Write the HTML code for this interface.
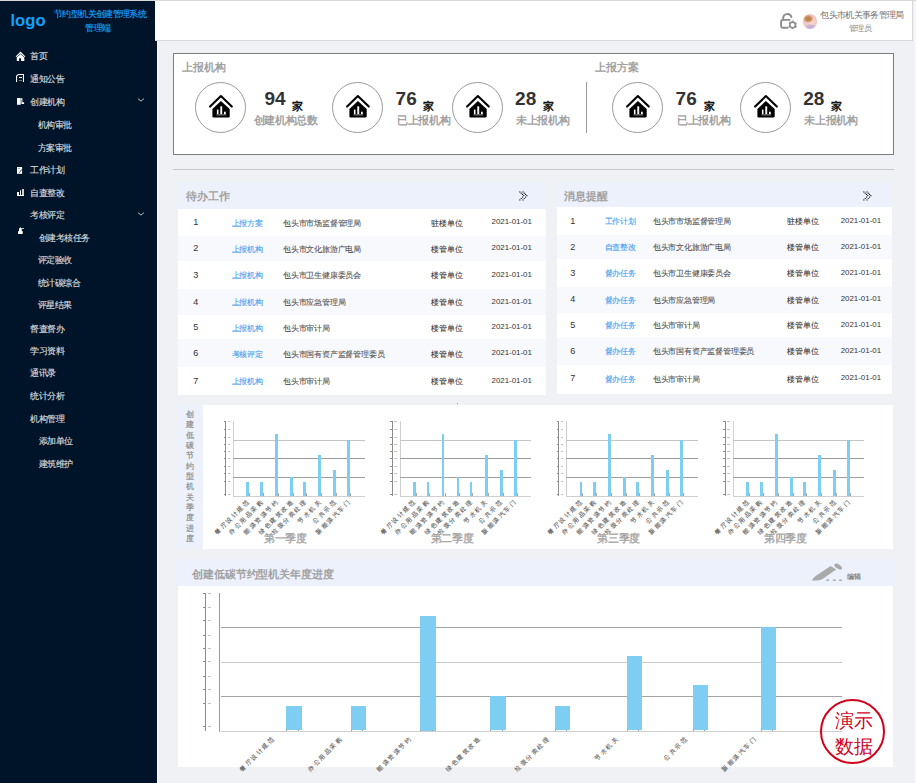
<!DOCTYPE html><html><head><meta charset="utf-8"><style>
html,body{margin:0;padding:0}
body{width:916px;height:783px;overflow:hidden;position:relative;background:#f0f1f5;font-family:"Liberation Sans", sans-serif}
.t{position:absolute;white-space:nowrap}
.b{position:absolute;box-sizing:border-box}
svg{position:absolute;overflow:visible}
</style></head><body>
<div class="b" style="left:0px;top:0px;width:916px;height:1px;background:#d9d9d9"></div>
<div class="b" style="left:0px;top:1px;width:157px;height:782px;background:#001429"></div>
<div class="b" style="left:155px;top:1px;width:758px;height:40px;background:#fff;border-bottom:1px solid #d8d8d8;border-right:1px solid #d8d8d8"></div>
<div class="b" style="left:157px;top:41px;width:1px;height:742px;background:#ffffff"></div>
<div class="b" style="left:914px;top:1px;width:2px;height:782px;background:#f5f6f9"></div>
<div class="b" style="left:456.5px;top:402.5px;width:1.5px;height:1.5px;background:#7a6a80;border-radius:50%"></div>
<div class="t" style="left:10.5px;top:9.6px;font-size:16.6px;line-height:22px;font-weight:700;color:#12a2ff">logo</div>
<div class="t" style="left:54.12px;top:8.40px;font-size:9px;letter-spacing:-0.64px;line-height:12px;color:#17a0fa;font-weight:400;-webkit-text-stroke:0.15px #17a0fa">节约型机关创建管理系统</div>
<div class="t" style="left:85.40px;top:21.80px;font-size:9px;letter-spacing:-0.80px;line-height:12px;color:#17a0fa;font-weight:400;-webkit-text-stroke:0.15px #17a0fa">管理端</div>
<div class="t" style="left:30.2px;top:50.00px;font-size:9px;letter-spacing:-0.55px;line-height:12px;color:#d5d9de;font-weight:400;-webkit-text-stroke:0.15px #d5d9de">首页</div>
<div class="t" style="left:30.2px;top:73.00px;font-size:9px;letter-spacing:-0.55px;line-height:12px;color:#d5d9de;font-weight:400;-webkit-text-stroke:0.15px #d5d9de">通知公告</div>
<div class="t" style="left:30.2px;top:96.00px;font-size:9px;letter-spacing:-0.55px;line-height:12px;color:#d5d9de;font-weight:400;-webkit-text-stroke:0.15px #d5d9de">创建机构</div>
<div class="t" style="left:38px;top:119.00px;font-size:9px;letter-spacing:-0.55px;line-height:12px;color:#d5d9de;font-weight:400;-webkit-text-stroke:0.15px #d5d9de">机构审批</div>
<div class="t" style="left:38px;top:141.60px;font-size:9px;letter-spacing:-0.55px;line-height:12px;color:#d5d9de;font-weight:400;-webkit-text-stroke:0.15px #d5d9de">方案审批</div>
<div class="t" style="left:30.4px;top:164.40px;font-size:9px;letter-spacing:-0.55px;line-height:12px;color:#d5d9de;font-weight:400;-webkit-text-stroke:0.15px #d5d9de">工作计划</div>
<div class="t" style="left:30.4px;top:187.00px;font-size:9px;letter-spacing:-0.55px;line-height:12px;color:#d5d9de;font-weight:400;-webkit-text-stroke:0.15px #d5d9de">自查整改</div>
<div class="t" style="left:30.4px;top:209.00px;font-size:9px;letter-spacing:-0.55px;line-height:12px;color:#d5d9de;font-weight:400;-webkit-text-stroke:0.15px #d5d9de">考核评定</div>
<div class="t" style="left:39px;top:232.00px;font-size:9px;letter-spacing:-0.55px;line-height:12px;color:#d5d9de;font-weight:400;-webkit-text-stroke:0.15px #d5d9de">创建考核任务</div>
<div class="t" style="left:38px;top:254.00px;font-size:9px;letter-spacing:-0.55px;line-height:12px;color:#d5d9de;font-weight:400;-webkit-text-stroke:0.15px #d5d9de">评定验收</div>
<div class="t" style="left:38px;top:276.50px;font-size:9px;letter-spacing:-0.55px;line-height:12px;color:#d5d9de;font-weight:400;-webkit-text-stroke:0.15px #d5d9de">统计碳综合</div>
<div class="t" style="left:38px;top:299.20px;font-size:9px;letter-spacing:-0.55px;line-height:12px;color:#d5d9de;font-weight:400;-webkit-text-stroke:0.15px #d5d9de">评星结果</div>
<div class="t" style="left:30.4px;top:322.50px;font-size:9px;letter-spacing:-0.55px;line-height:12px;color:#d5d9de;font-weight:400;-webkit-text-stroke:0.15px #d5d9de">督查督办</div>
<div class="t" style="left:30.4px;top:344.50px;font-size:9px;letter-spacing:-0.55px;line-height:12px;color:#d5d9de;font-weight:400;-webkit-text-stroke:0.15px #d5d9de">学习资料</div>
<div class="t" style="left:30.4px;top:367.20px;font-size:9px;letter-spacing:-0.55px;line-height:12px;color:#d5d9de;font-weight:400;-webkit-text-stroke:0.15px #d5d9de">通讯录</div>
<div class="t" style="left:30.2px;top:390.30px;font-size:9px;letter-spacing:-0.55px;line-height:12px;color:#d5d9de;font-weight:400;-webkit-text-stroke:0.15px #d5d9de">统计分析</div>
<div class="t" style="left:30.2px;top:413.30px;font-size:9px;letter-spacing:-0.55px;line-height:12px;color:#d5d9de;font-weight:400;-webkit-text-stroke:0.15px #d5d9de">机构管理</div>
<div class="t" style="left:38.9px;top:435.20px;font-size:9px;letter-spacing:-0.55px;line-height:12px;color:#d5d9de;font-weight:400;-webkit-text-stroke:0.15px #d5d9de">添加单位</div>
<div class="t" style="left:38.9px;top:458.30px;font-size:9px;letter-spacing:-0.55px;line-height:12px;color:#d5d9de;font-weight:400;-webkit-text-stroke:0.15px #d5d9de">建筑维护</div>
<svg style="left:137px;top:98px" width="8" height="5" viewBox="0 0 8 5"><polyline points="1,0.7 3.95,3.1 6.9,0.7" fill="none" stroke="#c5cad0" stroke-width="0.95"/></svg>
<svg style="left:137px;top:212.4px" width="8" height="5" viewBox="0 0 8 5"><polyline points="1,0.7 3.95,3.1 6.9,0.7" fill="none" stroke="#c5cad0" stroke-width="0.95"/></svg>
<svg style="left:14px;top:50px" width="13" height="13" viewBox="0 0 13 13"><path d="M1.6 6.4 L6.5 1.6 L11.4 6.4 L10.3 7.1 V11 H7.1 V8.3 H5.1 V11 H2.8 V7.1 Z" fill="#ffffff"/><path d="M2.6 7.2 L6.5 3.9 L10.4 7.2" fill="none" stroke="#001429" stroke-width="0.7"/></svg>
<svg style="left:13px;top:72px" width="14" height="12" viewBox="0 0 14 12"><path d="M3.55 10 V4 L5.4 2.45 H10.45 V10" fill="none" stroke="#ffffff" stroke-width="1.05"/><rect x="6" y="5" width="3" height="1" fill="#ffffff"/><rect x="6" y="8" width="3" height="0.9" fill="#7a8590"/></svg>
<svg style="left:14px;top:95px" width="12" height="12" viewBox="0 0 12 12"><path d="M3 3 H6.7 V9.8 H3 Z" fill="#ffffff"/><path d="M6.7 3.3 H8.4 V7.3 H10.1 V9.1 H7.4 V4.6 H6.7 Z" fill="#ffffff"/></svg>
<svg style="left:14px;top:164px" width="12" height="12" viewBox="0 0 12 12"><path d="M3 3 H8.1 V9.8 H3 Z" fill="#ffffff"/><path d="M4.2 4.5 H6.1" stroke="#9aa3ad" stroke-width="1"/><path d="M7.9 5.3 L5.4 8.6" stroke="#001429" stroke-width="0.75"/></svg>
<svg style="left:14px;top:186px" width="12" height="12" viewBox="0 0 12 12"><path d="M3 9 H10 V10 H3 Z M3 6 H5 V9.5 H3 Z M6 4.3 H7 V9.5 H6 Z M8.2 2.9 H9.8 V9.5 H8.2 Z" fill="#ffffff"/></svg>
<svg style="left:15px;top:224px" width="12" height="12" viewBox="0 0 12 12"><path d="M3 7.3 H7.8 V9.2 Q7.8 10 7 10 H3.5 Q3 10 3 9.4 Z M4 4.2 H4.8 L5.4 2.9 L6 4.2 H9 V5 H6.8 V7.3 H4 Z" fill="#ffffff"/></svg>
<svg style="left:778px;top:11px" width="22" height="20" viewBox="0 0 22 20"><g fill="none" stroke="#8c8c8c" stroke-width="1.9" stroke-linecap="round"><path d="M5.2 8.9 V7.2 A4.2 4.2 0 0 1 13.4 5.97"/><path d="M11.6 8.9 H4.6 Q3.1 8.9 3.1 10.4 V15.2 Q3.1 16.7 4.6 16.7 H9.6"/><circle cx="14.6" cy="13.9" r="2.8" stroke-width="1.6"/><circle cx="14.6" cy="13.9" r="3.85" stroke-width="1.1" stroke-linecap="butt" stroke-dasharray="1.7 2.33" stroke-dashoffset="-1.17"/></g></svg>
<div class="b" style="left:802.8px;top:14.2px;width:14.4px;height:14.4px;border-radius:50%;background:radial-gradient(ellipse 38% 28% at 38% 32%,#b8773f 0,#c8905a 55%,rgba(0,0,0,0) 100%),radial-gradient(ellipse 45% 25% at 55% 90%,#d9a6d6 0,#c8b8d0 60%,rgba(0,0,0,0) 100%),radial-gradient(circle at 55% 55%,#f6dcd0 0,#f5c8c8 50%,#f2b9bb 100%)"></div>
<div class="t" style="left:820.2px;top:8.80px;font-size:9px;letter-spacing:-0.66px;line-height:12px;color:#707070;font-weight:400;">包头市机关事务管理局</div>
<div class="t" style="left:849.2px;top:23.70px;font-size:8px;letter-spacing:-0.80px;line-height:10px;color:#858585;font-weight:400;">管理员</div>
<div class="b" style="left:173px;top:53px;width:721px;height:102px;background:#fff;border:1px solid #7c7c7c"></div>
<div class="b" style="left:173px;top:169px;width:721px;height:1px;background:#c9c9c9"></div>
<div class="t" style="left:182.4px;top:60.30px;font-size:11px;letter-spacing:-0.25px;line-height:14px;color:#a2a2a2;font-weight:700;">上报机构</div>
<div class="t" style="left:595.3px;top:60.30px;font-size:11px;letter-spacing:-0.25px;line-height:14px;color:#a2a2a2;font-weight:700;">上报方案</div>
<div class="b" style="left:586px;top:82px;width:1px;height:51px;background:#9a9a9a"></div>
<div class="b" style="left:195.4px;top:82px;width:51px;height:51px;border:1px solid #9a9a9a;border-radius:50%;background:#fff"></div>
<svg style="left:205.00px;top:90.30px" width="32" height="32" viewBox="0 0 32 32"><path d="M5.1 16.6 L15.9 6.1 L26.8 16.6" fill="none" stroke="#000" stroke-width="2.1" stroke-linecap="round" stroke-linejoin="round"/><path d="M7.4 18.9 L15.9 11 L24.7 18.9 V26.3 Q24.7 27.6 23.4 27.6 H8.7 Q7.4 27.6 7.4 26.3 Z" fill="#000"/><rect x="11.9" y="19.6" width="1.6" height="4.6" fill="#fff"/><rect x="15.3" y="16.3" width="1.9" height="7.9" fill="#fff"/><rect x="19" y="21.7" width="1.8" height="2.5" fill="#fff"/><rect x="11.5" y="24.3" width="9.7" height="1.1" fill="#888"/></svg>
<div class="t" style="left:264.5px;top:88px;font-size:19px;line-height:22px;font-weight:700;color:#333">94</div>
<div class="t" style="left:292px;top:99.00px;font-size:11px;letter-spacing:0.00px;line-height:14px;color:#000;font-weight:400;-webkit-text-stroke:0.35px #000">家</div>
<div class="t" style="left:253.7px;top:113.10px;font-size:11px;letter-spacing:-0.30px;line-height:14px;color:#a2a2a2;font-weight:700;">创建机构总数</div>
<div class="b" style="left:332.0px;top:82px;width:51px;height:51px;border:1px solid #9a9a9a;border-radius:50%;background:#fff"></div>
<svg style="left:341.60px;top:90.30px" width="32" height="32" viewBox="0 0 32 32"><path d="M5.1 16.6 L15.9 6.1 L26.8 16.6" fill="none" stroke="#000" stroke-width="2.1" stroke-linecap="round" stroke-linejoin="round"/><path d="M7.4 18.9 L15.9 11 L24.7 18.9 V26.3 Q24.7 27.6 23.4 27.6 H8.7 Q7.4 27.6 7.4 26.3 Z" fill="#000"/><rect x="11.9" y="19.6" width="1.6" height="4.6" fill="#fff"/><rect x="15.3" y="16.3" width="1.9" height="7.9" fill="#fff"/><rect x="19" y="21.7" width="1.8" height="2.5" fill="#fff"/><rect x="11.5" y="24.3" width="9.7" height="1.1" fill="#888"/></svg>
<div class="t" style="left:395.6px;top:88px;font-size:19px;line-height:22px;font-weight:700;color:#333">76</div>
<div class="t" style="left:423.2px;top:99.00px;font-size:11px;letter-spacing:0.00px;line-height:14px;color:#000;font-weight:400;-webkit-text-stroke:0.35px #000">家</div>
<div class="t" style="left:397.0px;top:113.10px;font-size:11px;letter-spacing:-0.30px;line-height:14px;color:#a2a2a2;font-weight:700;">已上报机构</div>
<div class="b" style="left:452.3px;top:82px;width:51px;height:51px;border:1px solid #9a9a9a;border-radius:50%;background:#fff"></div>
<svg style="left:461.90px;top:90.30px" width="32" height="32" viewBox="0 0 32 32"><path d="M5.1 16.6 L15.9 6.1 L26.8 16.6" fill="none" stroke="#000" stroke-width="2.1" stroke-linecap="round" stroke-linejoin="round"/><path d="M7.4 18.9 L15.9 11 L24.7 18.9 V26.3 Q24.7 27.6 23.4 27.6 H8.7 Q7.4 27.6 7.4 26.3 Z" fill="#000"/><rect x="11.9" y="19.6" width="1.6" height="4.6" fill="#fff"/><rect x="15.3" y="16.3" width="1.9" height="7.9" fill="#fff"/><rect x="19" y="21.7" width="1.8" height="2.5" fill="#fff"/><rect x="11.5" y="24.3" width="9.7" height="1.1" fill="#888"/></svg>
<div class="t" style="left:515.1px;top:88px;font-size:19px;line-height:22px;font-weight:700;color:#333">28</div>
<div class="t" style="left:542.7px;top:99.00px;font-size:11px;letter-spacing:0.00px;line-height:14px;color:#000;font-weight:400;-webkit-text-stroke:0.35px #000">家</div>
<div class="t" style="left:516.1px;top:113.10px;font-size:11px;letter-spacing:-0.30px;line-height:14px;color:#a2a2a2;font-weight:700;">未上报机构</div>
<div class="b" style="left:612.4px;top:82px;width:51px;height:51px;border:1px solid #9a9a9a;border-radius:50%;background:#fff"></div>
<svg style="left:622.00px;top:90.30px" width="32" height="32" viewBox="0 0 32 32"><path d="M5.1 16.6 L15.9 6.1 L26.8 16.6" fill="none" stroke="#000" stroke-width="2.1" stroke-linecap="round" stroke-linejoin="round"/><path d="M7.4 18.9 L15.9 11 L24.7 18.9 V26.3 Q24.7 27.6 23.4 27.6 H8.7 Q7.4 27.6 7.4 26.3 Z" fill="#000"/><rect x="11.9" y="19.6" width="1.6" height="4.6" fill="#fff"/><rect x="15.3" y="16.3" width="1.9" height="7.9" fill="#fff"/><rect x="19" y="21.7" width="1.8" height="2.5" fill="#fff"/><rect x="11.5" y="24.3" width="9.7" height="1.1" fill="#888"/></svg>
<div class="t" style="left:675.6px;top:88px;font-size:19px;line-height:22px;font-weight:700;color:#333">76</div>
<div class="t" style="left:703.6px;top:99.00px;font-size:11px;letter-spacing:0.00px;line-height:14px;color:#000;font-weight:400;-webkit-text-stroke:0.35px #000">家</div>
<div class="t" style="left:677.0px;top:113.10px;font-size:11px;letter-spacing:-0.30px;line-height:14px;color:#a2a2a2;font-weight:700;">已上报机构</div>
<div class="b" style="left:740.2px;top:82px;width:51px;height:51px;border:1px solid #9a9a9a;border-radius:50%;background:#fff"></div>
<svg style="left:749.80px;top:90.30px" width="32" height="32" viewBox="0 0 32 32"><path d="M5.1 16.6 L15.9 6.1 L26.8 16.6" fill="none" stroke="#000" stroke-width="2.1" stroke-linecap="round" stroke-linejoin="round"/><path d="M7.4 18.9 L15.9 11 L24.7 18.9 V26.3 Q24.7 27.6 23.4 27.6 H8.7 Q7.4 27.6 7.4 26.3 Z" fill="#000"/><rect x="11.9" y="19.6" width="1.6" height="4.6" fill="#fff"/><rect x="15.3" y="16.3" width="1.9" height="7.9" fill="#fff"/><rect x="19" y="21.7" width="1.8" height="2.5" fill="#fff"/><rect x="11.5" y="24.3" width="9.7" height="1.1" fill="#888"/></svg>
<div class="t" style="left:803.3px;top:88px;font-size:19px;line-height:22px;font-weight:700;color:#333">28</div>
<div class="t" style="left:831.2px;top:99.00px;font-size:11px;letter-spacing:0.00px;line-height:14px;color:#000;font-weight:400;-webkit-text-stroke:0.35px #000">家</div>
<div class="t" style="left:804.3px;top:113.10px;font-size:11px;letter-spacing:-0.30px;line-height:14px;color:#a2a2a2;font-weight:700;">未上报机构</div>
<div class="b" style="left:178px;top:182px;width:368px;height:27px;background:#edf1fc"></div>
<div class="t" style="left:186.4px;top:189.20px;font-size:11px;letter-spacing:-0.10px;line-height:14px;color:#a2a2a2;font-weight:700;">待办工作</div>
<svg style="left:518.5px;top:190.5px" width="10" height="10" viewBox="0 0 10 10"><g fill="#000"><circle cx="0.90" cy="0.90" r="0.62"/><circle cx="2.20" cy="2.17" r="0.62"/><circle cx="3.50" cy="3.43" r="0.62"/><circle cx="4.80" cy="4.70" r="0.62"/><circle cx="3.50" cy="6.10" r="0.62"/><circle cx="2.20" cy="7.50" r="0.62"/><circle cx="0.90" cy="8.90" r="0.62"/><circle cx="4.00" cy="0.90" r="0.62"/><circle cx="5.30" cy="2.17" r="0.62"/><circle cx="6.60" cy="3.43" r="0.62"/><circle cx="7.90" cy="4.70" r="0.62"/><circle cx="6.60" cy="6.10" r="0.62"/><circle cx="5.30" cy="7.50" r="0.62"/><circle cx="4.00" cy="8.90" r="0.62"/></g></svg>
<div class="b" style="left:178px;top:209px;width:368px;height:27px;background:#ffffff"></div>
<div class="b" style="left:178px;top:236px;width:368px;height:24.600000000000023px;background:#f8f9fd"></div>
<div class="b" style="left:178px;top:260.6px;width:368px;height:28.099999999999966px;background:#ffffff"></div>
<div class="b" style="left:178px;top:288.7px;width:368px;height:26.19999999999999px;background:#f8f9fd"></div>
<div class="b" style="left:178px;top:314.9px;width:368px;height:24.100000000000023px;background:#ffffff"></div>
<div class="b" style="left:178px;top:339px;width:368px;height:27.80000000000001px;background:#f8f9fd"></div>
<div class="b" style="left:178px;top:366.8px;width:368px;height:27.899999999999977px;background:#ffffff"></div>
<div class="t" style="left:193.3px;top:216.10px;font-size:9px;line-height:12px;color:#333">1</div>
<div class="t" style="left:231.5px;top:217.80px;font-size:8px;letter-spacing:-0.20px;line-height:12px;color:#45a1ee;font-weight:400;-webkit-text-stroke:0.12px #45a1ee">上报方案</div>
<div class="t" style="left:283.1px;top:217.80px;font-size:8px;letter-spacing:-0.20px;line-height:12px;color:#505050;font-weight:400;-webkit-text-stroke:0.08px #505050">包头市市场监督管理局</div>
<div class="t" style="left:431.1px;top:217.80px;font-size:8px;letter-spacing:-0.05px;line-height:12px;color:#333;font-weight:400;-webkit-text-stroke:0.08px #333">驻楼单位</div>
<div class="t" style="left:491.5px;top:216.10px;font-size:7.9px;line-height:12px;color:#333">2021-01-01</div>
<div class="t" style="left:193.3px;top:242.10px;font-size:9px;line-height:12px;color:#333">2</div>
<div class="t" style="left:231.5px;top:243.80px;font-size:8px;letter-spacing:-0.20px;line-height:12px;color:#45a1ee;font-weight:400;-webkit-text-stroke:0.12px #45a1ee">上报机构</div>
<div class="t" style="left:283.1px;top:243.80px;font-size:8px;letter-spacing:-0.20px;line-height:12px;color:#505050;font-weight:400;-webkit-text-stroke:0.08px #505050">包头市文化旅游广电局</div>
<div class="t" style="left:431.1px;top:243.80px;font-size:8px;letter-spacing:-0.05px;line-height:12px;color:#333;font-weight:400;-webkit-text-stroke:0.08px #333">楼管单位</div>
<div class="t" style="left:491.5px;top:242.10px;font-size:7.9px;line-height:12px;color:#333">2021-01-01</div>
<div class="t" style="left:193.3px;top:268.50px;font-size:9px;line-height:12px;color:#333">3</div>
<div class="t" style="left:231.5px;top:270.20px;font-size:8px;letter-spacing:-0.20px;line-height:12px;color:#45a1ee;font-weight:400;-webkit-text-stroke:0.12px #45a1ee">上报机构</div>
<div class="t" style="left:283.1px;top:270.20px;font-size:8px;letter-spacing:-0.20px;line-height:12px;color:#505050;font-weight:400;-webkit-text-stroke:0.08px #505050">包头市卫生健康委员会</div>
<div class="t" style="left:431.1px;top:270.20px;font-size:8px;letter-spacing:-0.05px;line-height:12px;color:#333;font-weight:400;-webkit-text-stroke:0.08px #333">楼管单位</div>
<div class="t" style="left:491.5px;top:268.50px;font-size:7.9px;line-height:12px;color:#333">2021-01-01</div>
<div class="t" style="left:193.3px;top:295.70px;font-size:9px;line-height:12px;color:#333">4</div>
<div class="t" style="left:231.5px;top:297.40px;font-size:8px;letter-spacing:-0.20px;line-height:12px;color:#45a1ee;font-weight:400;-webkit-text-stroke:0.12px #45a1ee">上报机构</div>
<div class="t" style="left:283.1px;top:297.40px;font-size:8px;letter-spacing:-0.20px;line-height:12px;color:#505050;font-weight:400;-webkit-text-stroke:0.08px #505050">包头市应急管理局</div>
<div class="t" style="left:431.1px;top:297.40px;font-size:8px;letter-spacing:-0.05px;line-height:12px;color:#333;font-weight:400;-webkit-text-stroke:0.08px #333">楼管单位</div>
<div class="t" style="left:491.5px;top:295.70px;font-size:7.9px;line-height:12px;color:#333">2021-01-01</div>
<div class="t" style="left:193.3px;top:321.00px;font-size:9px;line-height:12px;color:#333">5</div>
<div class="t" style="left:231.5px;top:322.70px;font-size:8px;letter-spacing:-0.20px;line-height:12px;color:#45a1ee;font-weight:400;-webkit-text-stroke:0.12px #45a1ee">上报机构</div>
<div class="t" style="left:283.1px;top:322.70px;font-size:8px;letter-spacing:-0.20px;line-height:12px;color:#505050;font-weight:400;-webkit-text-stroke:0.08px #505050">包头市审计局</div>
<div class="t" style="left:431.1px;top:322.70px;font-size:8px;letter-spacing:-0.05px;line-height:12px;color:#333;font-weight:400;-webkit-text-stroke:0.08px #333">楼管单位</div>
<div class="t" style="left:491.5px;top:321.00px;font-size:7.9px;line-height:12px;color:#333">2021-01-01</div>
<div class="t" style="left:193.3px;top:346.80px;font-size:9px;line-height:12px;color:#333">6</div>
<div class="t" style="left:231.5px;top:348.50px;font-size:8px;letter-spacing:-0.20px;line-height:12px;color:#45a1ee;font-weight:400;-webkit-text-stroke:0.12px #45a1ee">考核评定</div>
<div class="t" style="left:283.1px;top:348.50px;font-size:8px;letter-spacing:-0.20px;line-height:12px;color:#505050;font-weight:400;-webkit-text-stroke:0.08px #505050">包头市国有资产监督管理委员</div>
<div class="t" style="left:431.1px;top:348.50px;font-size:8px;letter-spacing:-0.05px;line-height:12px;color:#333;font-weight:400;-webkit-text-stroke:0.08px #333">楼管单位</div>
<div class="t" style="left:491.5px;top:346.80px;font-size:7.9px;line-height:12px;color:#333">2021-01-01</div>
<div class="t" style="left:193.3px;top:374.70px;font-size:9px;line-height:12px;color:#333">7</div>
<div class="t" style="left:231.5px;top:376.40px;font-size:8px;letter-spacing:-0.20px;line-height:12px;color:#45a1ee;font-weight:400;-webkit-text-stroke:0.12px #45a1ee">上报机构</div>
<div class="t" style="left:283.1px;top:376.40px;font-size:8px;letter-spacing:-0.20px;line-height:12px;color:#505050;font-weight:400;-webkit-text-stroke:0.08px #505050">包头市审计局</div>
<div class="t" style="left:431.1px;top:376.40px;font-size:8px;letter-spacing:-0.05px;line-height:12px;color:#333;font-weight:400;-webkit-text-stroke:0.08px #333">楼管单位</div>
<div class="t" style="left:491.5px;top:374.70px;font-size:7.9px;line-height:12px;color:#333">2021-01-01</div>
<div class="b" style="left:557px;top:182px;width:335px;height:25px;background:#edf1fc"></div>
<div class="t" style="left:564.3px;top:189.20px;font-size:11px;letter-spacing:-0.10px;line-height:14px;color:#a2a2a2;font-weight:700;">消息提醒</div>
<svg style="left:862.5px;top:190.5px" width="10" height="10" viewBox="0 0 10 10"><g fill="#000"><circle cx="0.90" cy="0.90" r="0.62"/><circle cx="2.20" cy="2.17" r="0.62"/><circle cx="3.50" cy="3.43" r="0.62"/><circle cx="4.80" cy="4.70" r="0.62"/><circle cx="3.50" cy="6.10" r="0.62"/><circle cx="2.20" cy="7.50" r="0.62"/><circle cx="0.90" cy="8.90" r="0.62"/><circle cx="4.00" cy="0.90" r="0.62"/><circle cx="5.30" cy="2.17" r="0.62"/><circle cx="6.60" cy="3.43" r="0.62"/><circle cx="7.90" cy="4.70" r="0.62"/><circle cx="6.60" cy="6.10" r="0.62"/><circle cx="5.30" cy="7.50" r="0.62"/><circle cx="4.00" cy="8.90" r="0.62"/></g></svg>
<div class="b" style="left:557px;top:207px;width:335px;height:27.69999999999999px;background:#ffffff"></div>
<div class="b" style="left:557px;top:234.7px;width:335px;height:24.19999999999999px;background:#f8f9fd"></div>
<div class="b" style="left:557px;top:258.9px;width:335px;height:27.80000000000001px;background:#ffffff"></div>
<div class="b" style="left:557px;top:286.7px;width:335px;height:25.900000000000034px;background:#f8f9fd"></div>
<div class="b" style="left:557px;top:312.6px;width:335px;height:24.5px;background:#ffffff"></div>
<div class="b" style="left:557px;top:337.1px;width:335px;height:27.899999999999977px;background:#f8f9fd"></div>
<div class="b" style="left:557px;top:365px;width:335px;height:28.69999999999999px;background:#ffffff"></div>
<div class="t" style="left:570.3px;top:214.50px;font-size:9px;line-height:12px;color:#333">1</div>
<div class="t" style="left:604.5px;top:216.20px;font-size:8px;letter-spacing:-0.20px;line-height:12px;color:#45a1ee;font-weight:400;-webkit-text-stroke:0.12px #45a1ee">工作计划</div>
<div class="t" style="left:652.9px;top:216.20px;font-size:8px;letter-spacing:-0.20px;line-height:12px;color:#505050;font-weight:400;-webkit-text-stroke:0.08px #505050">包头市市场监督管理局</div>
<div class="t" style="left:786.7px;top:216.20px;font-size:8px;letter-spacing:-0.05px;line-height:12px;color:#333;font-weight:400;-webkit-text-stroke:0.08px #333">驻楼单位</div>
<div class="t" style="left:840.7px;top:214.50px;font-size:7.9px;line-height:12px;color:#333">2021-01-01</div>
<div class="t" style="left:570.3px;top:240.50px;font-size:9px;line-height:12px;color:#333">2</div>
<div class="t" style="left:604.5px;top:242.20px;font-size:8px;letter-spacing:-0.20px;line-height:12px;color:#45a1ee;font-weight:400;-webkit-text-stroke:0.12px #45a1ee">自查整改</div>
<div class="t" style="left:652.9px;top:242.20px;font-size:8px;letter-spacing:-0.20px;line-height:12px;color:#505050;font-weight:400;-webkit-text-stroke:0.08px #505050">包头市文化旅游广电局</div>
<div class="t" style="left:786.7px;top:242.20px;font-size:8px;letter-spacing:-0.05px;line-height:12px;color:#333;font-weight:400;-webkit-text-stroke:0.08px #333">楼管单位</div>
<div class="t" style="left:840.7px;top:240.50px;font-size:7.9px;line-height:12px;color:#333">2021-01-01</div>
<div class="t" style="left:570.3px;top:266.50px;font-size:9px;line-height:12px;color:#333">3</div>
<div class="t" style="left:604.5px;top:268.20px;font-size:8px;letter-spacing:-0.20px;line-height:12px;color:#45a1ee;font-weight:400;-webkit-text-stroke:0.12px #45a1ee">督办任务</div>
<div class="t" style="left:652.9px;top:268.20px;font-size:8px;letter-spacing:-0.20px;line-height:12px;color:#505050;font-weight:400;-webkit-text-stroke:0.08px #505050">包头市卫生健康委员会</div>
<div class="t" style="left:786.7px;top:268.20px;font-size:8px;letter-spacing:-0.05px;line-height:12px;color:#333;font-weight:400;-webkit-text-stroke:0.08px #333">楼管单位</div>
<div class="t" style="left:840.7px;top:266.50px;font-size:7.9px;line-height:12px;color:#333">2021-01-01</div>
<div class="t" style="left:570.3px;top:293.40px;font-size:9px;line-height:12px;color:#333">4</div>
<div class="t" style="left:604.5px;top:295.10px;font-size:8px;letter-spacing:-0.20px;line-height:12px;color:#45a1ee;font-weight:400;-webkit-text-stroke:0.12px #45a1ee">督办任务</div>
<div class="t" style="left:652.9px;top:295.10px;font-size:8px;letter-spacing:-0.20px;line-height:12px;color:#505050;font-weight:400;-webkit-text-stroke:0.08px #505050">包头市应急管理局</div>
<div class="t" style="left:786.7px;top:295.10px;font-size:8px;letter-spacing:-0.05px;line-height:12px;color:#333;font-weight:400;-webkit-text-stroke:0.08px #333">楼管单位</div>
<div class="t" style="left:840.7px;top:293.40px;font-size:7.9px;line-height:12px;color:#333">2021-01-01</div>
<div class="t" style="left:570.3px;top:318.70px;font-size:9px;line-height:12px;color:#333">5</div>
<div class="t" style="left:604.5px;top:320.40px;font-size:8px;letter-spacing:-0.20px;line-height:12px;color:#45a1ee;font-weight:400;-webkit-text-stroke:0.12px #45a1ee">督办任务</div>
<div class="t" style="left:652.9px;top:320.40px;font-size:8px;letter-spacing:-0.20px;line-height:12px;color:#505050;font-weight:400;-webkit-text-stroke:0.08px #505050">包头市审计局</div>
<div class="t" style="left:786.7px;top:320.40px;font-size:8px;letter-spacing:-0.05px;line-height:12px;color:#333;font-weight:400;-webkit-text-stroke:0.08px #333">楼管单位</div>
<div class="t" style="left:840.7px;top:318.70px;font-size:7.9px;line-height:12px;color:#333">2021-01-01</div>
<div class="t" style="left:570.3px;top:344.60px;font-size:9px;line-height:12px;color:#333">6</div>
<div class="t" style="left:604.5px;top:346.30px;font-size:8px;letter-spacing:-0.20px;line-height:12px;color:#45a1ee;font-weight:400;-webkit-text-stroke:0.12px #45a1ee">督办任务</div>
<div class="t" style="left:652.9px;top:346.30px;font-size:8px;letter-spacing:-0.20px;line-height:12px;color:#505050;font-weight:400;-webkit-text-stroke:0.08px #505050">包头市国有资产监督管理委员</div>
<div class="t" style="left:786.7px;top:346.30px;font-size:8px;letter-spacing:-0.05px;line-height:12px;color:#333;font-weight:400;-webkit-text-stroke:0.08px #333">楼管单位</div>
<div class="t" style="left:840.7px;top:344.60px;font-size:7.9px;line-height:12px;color:#333">2021-01-01</div>
<div class="t" style="left:570.3px;top:372.10px;font-size:9px;line-height:12px;color:#333">7</div>
<div class="t" style="left:604.5px;top:373.80px;font-size:8px;letter-spacing:-0.20px;line-height:12px;color:#45a1ee;font-weight:400;-webkit-text-stroke:0.12px #45a1ee">督办任务</div>
<div class="t" style="left:652.9px;top:373.80px;font-size:8px;letter-spacing:-0.20px;line-height:12px;color:#505050;font-weight:400;-webkit-text-stroke:0.08px #505050">包头市审计局</div>
<div class="t" style="left:786.7px;top:373.80px;font-size:8px;letter-spacing:-0.05px;line-height:12px;color:#333;font-weight:400;-webkit-text-stroke:0.08px #333">楼管单位</div>
<div class="t" style="left:840.7px;top:372.10px;font-size:7.9px;line-height:12px;color:#333">2021-01-01</div>
<div class="b" style="left:178px;top:404.5px;width:715px;height:144.5px;background:#fff"></div>
<div class="b" style="left:178px;top:404.5px;width:25px;height:144.5px;background:#edf1fc"></div>
<div class="t" style="left:186px;top:410px;width:8px;font-size:8px;line-height:10.35px;color:#9a9a9a;font-weight:700;white-space:normal;word-break:break-all">创建低碳节约型机关季度进度</div>
<div class="b" style="left:225.0px;top:421px;width:1px;height:75px;background:#8c8c8c"></div>
<div class="b" style="left:223.5px;top:421.3px;width:2px;height:1px;background:#8c8c8c"></div>
<div class="b" style="left:227.5px;top:421.3px;width:2.5px;height:1px;background:#cdbdb5"></div>
<div class="b" style="left:223.5px;top:429.4px;width:2px;height:1px;background:#8c8c8c"></div>
<div class="b" style="left:227.5px;top:429.4px;width:2.5px;height:1px;background:#cdbdb5"></div>
<div class="b" style="left:223.5px;top:436.5px;width:2px;height:1px;background:#8c8c8c"></div>
<div class="b" style="left:227.5px;top:436.5px;width:2.5px;height:1px;background:#cdbdb5"></div>
<div class="b" style="left:223.5px;top:444.3px;width:2px;height:1px;background:#8c8c8c"></div>
<div class="b" style="left:227.5px;top:444.3px;width:2.5px;height:1px;background:#cdbdb5"></div>
<div class="b" style="left:223.5px;top:451.4px;width:2px;height:1px;background:#8c8c8c"></div>
<div class="b" style="left:227.5px;top:451.4px;width:2.5px;height:1px;background:#cdbdb5"></div>
<div class="b" style="left:223.5px;top:458.4px;width:2px;height:1px;background:#8c8c8c"></div>
<div class="b" style="left:227.5px;top:458.4px;width:2.5px;height:1px;background:#cdbdb5"></div>
<div class="b" style="left:223.5px;top:466.4px;width:2px;height:1px;background:#8c8c8c"></div>
<div class="b" style="left:227.5px;top:466.4px;width:2.5px;height:1px;background:#cdbdb5"></div>
<div class="b" style="left:223.5px;top:473.4px;width:2px;height:1px;background:#8c8c8c"></div>
<div class="b" style="left:227.5px;top:473.4px;width:2.5px;height:1px;background:#cdbdb5"></div>
<div class="b" style="left:223.5px;top:481.3px;width:2px;height:1px;background:#8c8c8c"></div>
<div class="b" style="left:227.5px;top:481.3px;width:2.5px;height:1px;background:#cdbdb5"></div>
<div class="b" style="left:223.5px;top:493.5px;width:2px;height:1px;background:#8c8c8c"></div>
<div class="b" style="left:227.5px;top:493.5px;width:2.5px;height:1px;background:#cdbdb5"></div>
<div class="b" style="left:233.0px;top:420.7px;width:1px;height:76px;background:#d0d0d0"></div>
<div class="b" style="left:233.0px;top:495.8px;width:131.5px;height:1px;background:#cfcfcf"></div>
<div class="b" style="left:233.0px;top:440px;width:131.5px;height:1px;background:#c4c4c4"></div>
<div class="b" style="left:233.0px;top:458px;width:131.5px;height:1px;background:#9c9c9c"></div>
<div class="b" style="left:233.0px;top:477px;width:131.5px;height:1px;background:#a0a0a0"></div>
<div class="b" style="left:246.3px;top:481.9px;width:2.8px;height:13.900000000000034px;background:#7ecef4"></div>
<div class="b" style="left:249.10000000000002px;top:493px;width:0.8px;height:3px;background:#aaa"></div>
<div class="b" style="left:260.0px;top:481.9px;width:2.8px;height:13.900000000000034px;background:#7ecef4"></div>
<div class="b" style="left:262.8px;top:493px;width:0.8px;height:3px;background:#aaa"></div>
<div class="b" style="left:275.1px;top:434.1px;width:2.8px;height:61.69999999999999px;background:#7ecef4"></div>
<div class="b" style="left:277.90000000000003px;top:493px;width:0.8px;height:3px;background:#aaa"></div>
<div class="b" style="left:290.0px;top:476.9px;width:2.8px;height:18.900000000000034px;background:#7ecef4"></div>
<div class="b" style="left:292.8px;top:493px;width:0.8px;height:3px;background:#aaa"></div>
<div class="b" style="left:303.0px;top:481.9px;width:2.8px;height:13.900000000000034px;background:#7ecef4"></div>
<div class="b" style="left:305.8px;top:493px;width:0.8px;height:3px;background:#aaa"></div>
<div class="b" style="left:318.2px;top:455px;width:2.8px;height:40.80000000000001px;background:#7ecef4"></div>
<div class="b" style="left:321.0px;top:493px;width:0.8px;height:3px;background:#aaa"></div>
<div class="b" style="left:333.2px;top:470px;width:2.8px;height:25.80000000000001px;background:#7ecef4"></div>
<div class="b" style="left:336.0px;top:493px;width:0.8px;height:3px;background:#aaa"></div>
<div class="b" style="left:347.2px;top:440.2px;width:2.8px;height:55.60000000000002px;background:#7ecef4"></div>
<div class="b" style="left:350.0px;top:493px;width:0.8px;height:3px;background:#aaa"></div>
<div class="t" style="left:146.80px;top:497.50px;width:100px;text-align:right;font-size:6px;letter-spacing:1.9px;line-height:6px;color:#555;font-weight:400;-webkit-text-stroke:0.1px #555;transform-origin:100% 0;transform:rotate(-45deg)">餐厅设计规范</div>
<div class="t" style="left:160.50px;top:497.50px;width:100px;text-align:right;font-size:6px;letter-spacing:1.9px;line-height:6px;color:#555;font-weight:400;-webkit-text-stroke:0.1px #555;transform-origin:100% 0;transform:rotate(-45deg)">办公用品采购</div>
<div class="t" style="left:175.60px;top:497.50px;width:100px;text-align:right;font-size:6px;letter-spacing:1.9px;line-height:6px;color:#555;font-weight:400;-webkit-text-stroke:0.1px #555;transform-origin:100% 0;transform:rotate(-45deg)">能源资源节约</div>
<div class="t" style="left:190.50px;top:497.50px;width:100px;text-align:right;font-size:6px;letter-spacing:1.9px;line-height:6px;color:#555;font-weight:400;-webkit-text-stroke:0.1px #555;transform-origin:100% 0;transform:rotate(-45deg)">绿色建筑改造</div>
<div class="t" style="left:203.50px;top:497.50px;width:100px;text-align:right;font-size:6px;letter-spacing:1.9px;line-height:6px;color:#555;font-weight:400;-webkit-text-stroke:0.1px #555;transform-origin:100% 0;transform:rotate(-45deg)">垃圾分类处理</div>
<div class="t" style="left:218.70px;top:497.50px;width:100px;text-align:right;font-size:6px;letter-spacing:1.9px;line-height:6px;color:#555;font-weight:400;-webkit-text-stroke:0.1px #555;transform-origin:100% 0;transform:rotate(-45deg)">节水机关</div>
<div class="t" style="left:233.70px;top:497.50px;width:100px;text-align:right;font-size:6px;letter-spacing:1.9px;line-height:6px;color:#555;font-weight:400;-webkit-text-stroke:0.1px #555;transform-origin:100% 0;transform:rotate(-45deg)">公共示范</div>
<div class="t" style="left:247.70px;top:497.50px;width:100px;text-align:right;font-size:6px;letter-spacing:1.9px;line-height:6px;color:#555;font-weight:400;-webkit-text-stroke:0.1px #555;transform-origin:100% 0;transform:rotate(-45deg)">新能源汽车门</div>
<div class="t" style="left:264.10px;top:531.00px;font-size:11px;letter-spacing:-0.30px;line-height:14px;color:#a0a0a0;font-weight:400;-webkit-text-stroke:0.3px #a0a0a0">第一季度</div>
<div class="b" style="left:391.6px;top:421px;width:1px;height:75px;background:#8c8c8c"></div>
<div class="b" style="left:390.1px;top:421.3px;width:2px;height:1px;background:#8c8c8c"></div>
<div class="b" style="left:394.1px;top:421.3px;width:2.5px;height:1px;background:#cdbdb5"></div>
<div class="b" style="left:390.1px;top:429.4px;width:2px;height:1px;background:#8c8c8c"></div>
<div class="b" style="left:394.1px;top:429.4px;width:2.5px;height:1px;background:#cdbdb5"></div>
<div class="b" style="left:390.1px;top:436.5px;width:2px;height:1px;background:#8c8c8c"></div>
<div class="b" style="left:394.1px;top:436.5px;width:2.5px;height:1px;background:#cdbdb5"></div>
<div class="b" style="left:390.1px;top:444.3px;width:2px;height:1px;background:#8c8c8c"></div>
<div class="b" style="left:394.1px;top:444.3px;width:2.5px;height:1px;background:#cdbdb5"></div>
<div class="b" style="left:390.1px;top:451.4px;width:2px;height:1px;background:#8c8c8c"></div>
<div class="b" style="left:394.1px;top:451.4px;width:2.5px;height:1px;background:#cdbdb5"></div>
<div class="b" style="left:390.1px;top:458.4px;width:2px;height:1px;background:#8c8c8c"></div>
<div class="b" style="left:394.1px;top:458.4px;width:2.5px;height:1px;background:#cdbdb5"></div>
<div class="b" style="left:390.1px;top:466.4px;width:2px;height:1px;background:#8c8c8c"></div>
<div class="b" style="left:394.1px;top:466.4px;width:2.5px;height:1px;background:#cdbdb5"></div>
<div class="b" style="left:390.1px;top:473.4px;width:2px;height:1px;background:#8c8c8c"></div>
<div class="b" style="left:394.1px;top:473.4px;width:2.5px;height:1px;background:#cdbdb5"></div>
<div class="b" style="left:390.1px;top:481.3px;width:2px;height:1px;background:#8c8c8c"></div>
<div class="b" style="left:394.1px;top:481.3px;width:2.5px;height:1px;background:#cdbdb5"></div>
<div class="b" style="left:390.1px;top:493.5px;width:2px;height:1px;background:#8c8c8c"></div>
<div class="b" style="left:394.1px;top:493.5px;width:2.5px;height:1px;background:#cdbdb5"></div>
<div class="b" style="left:399.6px;top:420.7px;width:1px;height:76px;background:#d0d0d0"></div>
<div class="b" style="left:399.6px;top:495.8px;width:131.5px;height:1px;background:#cfcfcf"></div>
<div class="b" style="left:399.6px;top:440px;width:131.5px;height:1px;background:#c4c4c4"></div>
<div class="b" style="left:399.6px;top:458px;width:131.5px;height:1px;background:#9c9c9c"></div>
<div class="b" style="left:399.6px;top:477px;width:131.5px;height:1px;background:#a0a0a0"></div>
<div class="b" style="left:412.9px;top:481.9px;width:2.8px;height:13.900000000000034px;background:#7ecef4"></div>
<div class="b" style="left:415.7px;top:493px;width:0.8px;height:3px;background:#aaa"></div>
<div class="b" style="left:426.6px;top:481.9px;width:2.8px;height:13.900000000000034px;background:#7ecef4"></div>
<div class="b" style="left:429.40000000000003px;top:493px;width:0.8px;height:3px;background:#aaa"></div>
<div class="b" style="left:441.70000000000005px;top:434.1px;width:2.8px;height:61.69999999999999px;background:#7ecef4"></div>
<div class="b" style="left:444.50000000000006px;top:493px;width:0.8px;height:3px;background:#aaa"></div>
<div class="b" style="left:456.6px;top:476.9px;width:2.8px;height:18.900000000000034px;background:#7ecef4"></div>
<div class="b" style="left:459.40000000000003px;top:493px;width:0.8px;height:3px;background:#aaa"></div>
<div class="b" style="left:469.6px;top:481.9px;width:2.8px;height:13.900000000000034px;background:#7ecef4"></div>
<div class="b" style="left:472.40000000000003px;top:493px;width:0.8px;height:3px;background:#aaa"></div>
<div class="b" style="left:484.79999999999995px;top:455px;width:2.8px;height:40.80000000000001px;background:#7ecef4"></div>
<div class="b" style="left:487.59999999999997px;top:493px;width:0.8px;height:3px;background:#aaa"></div>
<div class="b" style="left:499.79999999999995px;top:470px;width:2.8px;height:25.80000000000001px;background:#7ecef4"></div>
<div class="b" style="left:502.59999999999997px;top:493px;width:0.8px;height:3px;background:#aaa"></div>
<div class="b" style="left:513.8px;top:440.2px;width:2.8px;height:55.60000000000002px;background:#7ecef4"></div>
<div class="b" style="left:516.5999999999999px;top:493px;width:0.8px;height:3px;background:#aaa"></div>
<div class="t" style="left:313.40px;top:497.50px;width:100px;text-align:right;font-size:6px;letter-spacing:1.9px;line-height:6px;color:#555;font-weight:400;-webkit-text-stroke:0.1px #555;transform-origin:100% 0;transform:rotate(-45deg)">餐厅设计规范</div>
<div class="t" style="left:327.10px;top:497.50px;width:100px;text-align:right;font-size:6px;letter-spacing:1.9px;line-height:6px;color:#555;font-weight:400;-webkit-text-stroke:0.1px #555;transform-origin:100% 0;transform:rotate(-45deg)">办公用品采购</div>
<div class="t" style="left:342.20px;top:497.50px;width:100px;text-align:right;font-size:6px;letter-spacing:1.9px;line-height:6px;color:#555;font-weight:400;-webkit-text-stroke:0.1px #555;transform-origin:100% 0;transform:rotate(-45deg)">能源资源节约</div>
<div class="t" style="left:357.10px;top:497.50px;width:100px;text-align:right;font-size:6px;letter-spacing:1.9px;line-height:6px;color:#555;font-weight:400;-webkit-text-stroke:0.1px #555;transform-origin:100% 0;transform:rotate(-45deg)">绿色建筑改造</div>
<div class="t" style="left:370.10px;top:497.50px;width:100px;text-align:right;font-size:6px;letter-spacing:1.9px;line-height:6px;color:#555;font-weight:400;-webkit-text-stroke:0.1px #555;transform-origin:100% 0;transform:rotate(-45deg)">垃圾分类处理</div>
<div class="t" style="left:385.30px;top:497.50px;width:100px;text-align:right;font-size:6px;letter-spacing:1.9px;line-height:6px;color:#555;font-weight:400;-webkit-text-stroke:0.1px #555;transform-origin:100% 0;transform:rotate(-45deg)">节水机关</div>
<div class="t" style="left:400.30px;top:497.50px;width:100px;text-align:right;font-size:6px;letter-spacing:1.9px;line-height:6px;color:#555;font-weight:400;-webkit-text-stroke:0.1px #555;transform-origin:100% 0;transform:rotate(-45deg)">公共示范</div>
<div class="t" style="left:414.30px;top:497.50px;width:100px;text-align:right;font-size:6px;letter-spacing:1.9px;line-height:6px;color:#555;font-weight:400;-webkit-text-stroke:0.1px #555;transform-origin:100% 0;transform:rotate(-45deg)">新能源汽车门</div>
<div class="t" style="left:430.70px;top:531.00px;font-size:11px;letter-spacing:-0.30px;line-height:14px;color:#a0a0a0;font-weight:400;-webkit-text-stroke:0.3px #a0a0a0">第二季度</div>
<div class="b" style="left:558.2px;top:421px;width:1px;height:75px;background:#8c8c8c"></div>
<div class="b" style="left:556.7px;top:421.3px;width:2px;height:1px;background:#8c8c8c"></div>
<div class="b" style="left:560.7px;top:421.3px;width:2.5px;height:1px;background:#cdbdb5"></div>
<div class="b" style="left:556.7px;top:429.4px;width:2px;height:1px;background:#8c8c8c"></div>
<div class="b" style="left:560.7px;top:429.4px;width:2.5px;height:1px;background:#cdbdb5"></div>
<div class="b" style="left:556.7px;top:436.5px;width:2px;height:1px;background:#8c8c8c"></div>
<div class="b" style="left:560.7px;top:436.5px;width:2.5px;height:1px;background:#cdbdb5"></div>
<div class="b" style="left:556.7px;top:444.3px;width:2px;height:1px;background:#8c8c8c"></div>
<div class="b" style="left:560.7px;top:444.3px;width:2.5px;height:1px;background:#cdbdb5"></div>
<div class="b" style="left:556.7px;top:451.4px;width:2px;height:1px;background:#8c8c8c"></div>
<div class="b" style="left:560.7px;top:451.4px;width:2.5px;height:1px;background:#cdbdb5"></div>
<div class="b" style="left:556.7px;top:458.4px;width:2px;height:1px;background:#8c8c8c"></div>
<div class="b" style="left:560.7px;top:458.4px;width:2.5px;height:1px;background:#cdbdb5"></div>
<div class="b" style="left:556.7px;top:466.4px;width:2px;height:1px;background:#8c8c8c"></div>
<div class="b" style="left:560.7px;top:466.4px;width:2.5px;height:1px;background:#cdbdb5"></div>
<div class="b" style="left:556.7px;top:473.4px;width:2px;height:1px;background:#8c8c8c"></div>
<div class="b" style="left:560.7px;top:473.4px;width:2.5px;height:1px;background:#cdbdb5"></div>
<div class="b" style="left:556.7px;top:481.3px;width:2px;height:1px;background:#8c8c8c"></div>
<div class="b" style="left:560.7px;top:481.3px;width:2.5px;height:1px;background:#cdbdb5"></div>
<div class="b" style="left:556.7px;top:493.5px;width:2px;height:1px;background:#8c8c8c"></div>
<div class="b" style="left:560.7px;top:493.5px;width:2.5px;height:1px;background:#cdbdb5"></div>
<div class="b" style="left:566.2px;top:420.7px;width:1px;height:76px;background:#d0d0d0"></div>
<div class="b" style="left:566.2px;top:495.8px;width:131.5px;height:1px;background:#cfcfcf"></div>
<div class="b" style="left:566.2px;top:440px;width:131.5px;height:1px;background:#c4c4c4"></div>
<div class="b" style="left:566.2px;top:458px;width:131.5px;height:1px;background:#9c9c9c"></div>
<div class="b" style="left:566.2px;top:477px;width:131.5px;height:1px;background:#a0a0a0"></div>
<div class="b" style="left:579.5px;top:481.9px;width:2.8px;height:13.900000000000034px;background:#7ecef4"></div>
<div class="b" style="left:582.3px;top:493px;width:0.8px;height:3px;background:#aaa"></div>
<div class="b" style="left:593.2px;top:481.9px;width:2.8px;height:13.900000000000034px;background:#7ecef4"></div>
<div class="b" style="left:596.0px;top:493px;width:0.8px;height:3px;background:#aaa"></div>
<div class="b" style="left:608.3px;top:434.1px;width:2.8px;height:61.69999999999999px;background:#7ecef4"></div>
<div class="b" style="left:611.0999999999999px;top:493px;width:0.8px;height:3px;background:#aaa"></div>
<div class="b" style="left:623.2px;top:476.9px;width:2.8px;height:18.900000000000034px;background:#7ecef4"></div>
<div class="b" style="left:626.0px;top:493px;width:0.8px;height:3px;background:#aaa"></div>
<div class="b" style="left:636.2px;top:481.9px;width:2.8px;height:13.900000000000034px;background:#7ecef4"></div>
<div class="b" style="left:639.0px;top:493px;width:0.8px;height:3px;background:#aaa"></div>
<div class="b" style="left:651.4px;top:455px;width:2.8px;height:40.80000000000001px;background:#7ecef4"></div>
<div class="b" style="left:654.1999999999999px;top:493px;width:0.8px;height:3px;background:#aaa"></div>
<div class="b" style="left:666.4px;top:470px;width:2.8px;height:25.80000000000001px;background:#7ecef4"></div>
<div class="b" style="left:669.1999999999999px;top:493px;width:0.8px;height:3px;background:#aaa"></div>
<div class="b" style="left:680.4px;top:440.2px;width:2.8px;height:55.60000000000002px;background:#7ecef4"></div>
<div class="b" style="left:683.1999999999999px;top:493px;width:0.8px;height:3px;background:#aaa"></div>
<div class="t" style="left:480.00px;top:497.50px;width:100px;text-align:right;font-size:6px;letter-spacing:1.9px;line-height:6px;color:#555;font-weight:400;-webkit-text-stroke:0.1px #555;transform-origin:100% 0;transform:rotate(-45deg)">餐厅设计规范</div>
<div class="t" style="left:493.70px;top:497.50px;width:100px;text-align:right;font-size:6px;letter-spacing:1.9px;line-height:6px;color:#555;font-weight:400;-webkit-text-stroke:0.1px #555;transform-origin:100% 0;transform:rotate(-45deg)">办公用品采购</div>
<div class="t" style="left:508.80px;top:497.50px;width:100px;text-align:right;font-size:6px;letter-spacing:1.9px;line-height:6px;color:#555;font-weight:400;-webkit-text-stroke:0.1px #555;transform-origin:100% 0;transform:rotate(-45deg)">能源资源节约</div>
<div class="t" style="left:523.70px;top:497.50px;width:100px;text-align:right;font-size:6px;letter-spacing:1.9px;line-height:6px;color:#555;font-weight:400;-webkit-text-stroke:0.1px #555;transform-origin:100% 0;transform:rotate(-45deg)">绿色建筑改造</div>
<div class="t" style="left:536.70px;top:497.50px;width:100px;text-align:right;font-size:6px;letter-spacing:1.9px;line-height:6px;color:#555;font-weight:400;-webkit-text-stroke:0.1px #555;transform-origin:100% 0;transform:rotate(-45deg)">垃圾分类处理</div>
<div class="t" style="left:551.90px;top:497.50px;width:100px;text-align:right;font-size:6px;letter-spacing:1.9px;line-height:6px;color:#555;font-weight:400;-webkit-text-stroke:0.1px #555;transform-origin:100% 0;transform:rotate(-45deg)">节水机关</div>
<div class="t" style="left:566.90px;top:497.50px;width:100px;text-align:right;font-size:6px;letter-spacing:1.9px;line-height:6px;color:#555;font-weight:400;-webkit-text-stroke:0.1px #555;transform-origin:100% 0;transform:rotate(-45deg)">公共示范</div>
<div class="t" style="left:580.90px;top:497.50px;width:100px;text-align:right;font-size:6px;letter-spacing:1.9px;line-height:6px;color:#555;font-weight:400;-webkit-text-stroke:0.1px #555;transform-origin:100% 0;transform:rotate(-45deg)">新能源汽车门</div>
<div class="t" style="left:597.30px;top:531.00px;font-size:11px;letter-spacing:-0.30px;line-height:14px;color:#a0a0a0;font-weight:400;-webkit-text-stroke:0.3px #a0a0a0">第三季度</div>
<div class="b" style="left:724.8px;top:421px;width:1px;height:75px;background:#8c8c8c"></div>
<div class="b" style="left:723.3px;top:421.3px;width:2px;height:1px;background:#8c8c8c"></div>
<div class="b" style="left:727.3px;top:421.3px;width:2.5px;height:1px;background:#cdbdb5"></div>
<div class="b" style="left:723.3px;top:429.4px;width:2px;height:1px;background:#8c8c8c"></div>
<div class="b" style="left:727.3px;top:429.4px;width:2.5px;height:1px;background:#cdbdb5"></div>
<div class="b" style="left:723.3px;top:436.5px;width:2px;height:1px;background:#8c8c8c"></div>
<div class="b" style="left:727.3px;top:436.5px;width:2.5px;height:1px;background:#cdbdb5"></div>
<div class="b" style="left:723.3px;top:444.3px;width:2px;height:1px;background:#8c8c8c"></div>
<div class="b" style="left:727.3px;top:444.3px;width:2.5px;height:1px;background:#cdbdb5"></div>
<div class="b" style="left:723.3px;top:451.4px;width:2px;height:1px;background:#8c8c8c"></div>
<div class="b" style="left:727.3px;top:451.4px;width:2.5px;height:1px;background:#cdbdb5"></div>
<div class="b" style="left:723.3px;top:458.4px;width:2px;height:1px;background:#8c8c8c"></div>
<div class="b" style="left:727.3px;top:458.4px;width:2.5px;height:1px;background:#cdbdb5"></div>
<div class="b" style="left:723.3px;top:466.4px;width:2px;height:1px;background:#8c8c8c"></div>
<div class="b" style="left:727.3px;top:466.4px;width:2.5px;height:1px;background:#cdbdb5"></div>
<div class="b" style="left:723.3px;top:473.4px;width:2px;height:1px;background:#8c8c8c"></div>
<div class="b" style="left:727.3px;top:473.4px;width:2.5px;height:1px;background:#cdbdb5"></div>
<div class="b" style="left:723.3px;top:481.3px;width:2px;height:1px;background:#8c8c8c"></div>
<div class="b" style="left:727.3px;top:481.3px;width:2.5px;height:1px;background:#cdbdb5"></div>
<div class="b" style="left:723.3px;top:493.5px;width:2px;height:1px;background:#8c8c8c"></div>
<div class="b" style="left:727.3px;top:493.5px;width:2.5px;height:1px;background:#cdbdb5"></div>
<div class="b" style="left:732.8px;top:420.7px;width:1px;height:76px;background:#d0d0d0"></div>
<div class="b" style="left:732.8px;top:495.8px;width:131.5px;height:1px;background:#cfcfcf"></div>
<div class="b" style="left:732.8px;top:440px;width:131.5px;height:1px;background:#c4c4c4"></div>
<div class="b" style="left:732.8px;top:458px;width:131.5px;height:1px;background:#9c9c9c"></div>
<div class="b" style="left:732.8px;top:477px;width:131.5px;height:1px;background:#a0a0a0"></div>
<div class="b" style="left:746.0999999999999px;top:481.9px;width:2.8px;height:13.900000000000034px;background:#7ecef4"></div>
<div class="b" style="left:748.8999999999999px;top:493px;width:0.8px;height:3px;background:#aaa"></div>
<div class="b" style="left:759.8px;top:481.9px;width:2.8px;height:13.900000000000034px;background:#7ecef4"></div>
<div class="b" style="left:762.5999999999999px;top:493px;width:0.8px;height:3px;background:#aaa"></div>
<div class="b" style="left:774.9px;top:434.1px;width:2.8px;height:61.69999999999999px;background:#7ecef4"></div>
<div class="b" style="left:777.6999999999999px;top:493px;width:0.8px;height:3px;background:#aaa"></div>
<div class="b" style="left:789.8px;top:476.9px;width:2.8px;height:18.900000000000034px;background:#7ecef4"></div>
<div class="b" style="left:792.5999999999999px;top:493px;width:0.8px;height:3px;background:#aaa"></div>
<div class="b" style="left:802.8px;top:481.9px;width:2.8px;height:13.900000000000034px;background:#7ecef4"></div>
<div class="b" style="left:805.5999999999999px;top:493px;width:0.8px;height:3px;background:#aaa"></div>
<div class="b" style="left:818.0px;top:455px;width:2.8px;height:40.80000000000001px;background:#7ecef4"></div>
<div class="b" style="left:820.8px;top:493px;width:0.8px;height:3px;background:#aaa"></div>
<div class="b" style="left:833.0px;top:470px;width:2.8px;height:25.80000000000001px;background:#7ecef4"></div>
<div class="b" style="left:835.8px;top:493px;width:0.8px;height:3px;background:#aaa"></div>
<div class="b" style="left:847.0px;top:440.2px;width:2.8px;height:55.60000000000002px;background:#7ecef4"></div>
<div class="b" style="left:849.8px;top:493px;width:0.8px;height:3px;background:#aaa"></div>
<div class="t" style="left:646.60px;top:497.50px;width:100px;text-align:right;font-size:6px;letter-spacing:1.9px;line-height:6px;color:#555;font-weight:400;-webkit-text-stroke:0.1px #555;transform-origin:100% 0;transform:rotate(-45deg)">餐厅设计规范</div>
<div class="t" style="left:660.30px;top:497.50px;width:100px;text-align:right;font-size:6px;letter-spacing:1.9px;line-height:6px;color:#555;font-weight:400;-webkit-text-stroke:0.1px #555;transform-origin:100% 0;transform:rotate(-45deg)">办公用品采购</div>
<div class="t" style="left:675.40px;top:497.50px;width:100px;text-align:right;font-size:6px;letter-spacing:1.9px;line-height:6px;color:#555;font-weight:400;-webkit-text-stroke:0.1px #555;transform-origin:100% 0;transform:rotate(-45deg)">能源资源节约</div>
<div class="t" style="left:690.30px;top:497.50px;width:100px;text-align:right;font-size:6px;letter-spacing:1.9px;line-height:6px;color:#555;font-weight:400;-webkit-text-stroke:0.1px #555;transform-origin:100% 0;transform:rotate(-45deg)">绿色建筑改造</div>
<div class="t" style="left:703.30px;top:497.50px;width:100px;text-align:right;font-size:6px;letter-spacing:1.9px;line-height:6px;color:#555;font-weight:400;-webkit-text-stroke:0.1px #555;transform-origin:100% 0;transform:rotate(-45deg)">垃圾分类处理</div>
<div class="t" style="left:718.50px;top:497.50px;width:100px;text-align:right;font-size:6px;letter-spacing:1.9px;line-height:6px;color:#555;font-weight:400;-webkit-text-stroke:0.1px #555;transform-origin:100% 0;transform:rotate(-45deg)">节水机关</div>
<div class="t" style="left:733.50px;top:497.50px;width:100px;text-align:right;font-size:6px;letter-spacing:1.9px;line-height:6px;color:#555;font-weight:400;-webkit-text-stroke:0.1px #555;transform-origin:100% 0;transform:rotate(-45deg)">公共示范</div>
<div class="t" style="left:747.50px;top:497.50px;width:100px;text-align:right;font-size:6px;letter-spacing:1.9px;line-height:6px;color:#555;font-weight:400;-webkit-text-stroke:0.1px #555;transform-origin:100% 0;transform:rotate(-45deg)">新能源汽车门</div>
<div class="t" style="left:763.90px;top:531.00px;font-size:11px;letter-spacing:-0.30px;line-height:14px;color:#a0a0a0;font-weight:400;-webkit-text-stroke:0.3px #a0a0a0">第四季度</div>
<div class="b" style="left:178px;top:559.4px;width:715px;height:26.6px;background:#edf1fc"></div>
<div class="b" style="left:178px;top:586px;width:715px;height:180.6px;background:#fff"></div>
<div class="t" style="left:192.4px;top:567.20px;font-size:11px;letter-spacing:-0.15px;line-height:14px;color:#a2a2a2;font-weight:700;">创建低碳节约型机关年度进度</div>
<svg style="left:812px;top:563px" width="34" height="19" viewBox="0 0 34 19"><path d="M0 17.4 Q1.2 14.6 4.5 12.6 L18.6 2.9 L24.2 6.4 L10.2 16.2 Q7.5 17.6 0 17.4 Z" fill="#aaaaaa"/><ellipse cx="26.2" cy="3.6" rx="4.3" ry="2.1" transform="rotate(33 26.2 3.6)" fill="#aaaaaa"/><rect x="14.2" y="16.5" width="3" height="1.4" fill="#a8a8a8"/><rect x="20.8" y="16.5" width="3" height="1.4" fill="#a8a8a8"/><rect x="26.9" y="16.5" width="3" height="1.4" fill="#a8a8a8"/></svg>
<div class="t" style="left:847.2px;top:571.50px;font-size:7px;letter-spacing:0.00px;line-height:9px;color:#888;font-weight:700;">编辑</div>
<div class="b" style="left:205px;top:593px;width:1px;height:138px;background:#8c8c8c"></div>
<div class="b" style="left:202.5px;top:593px;width:3px;height:1px;background:#8c8c8c"></div>
<div class="b" style="left:208.4px;top:593px;width:2.2px;height:1px;background:#cdbdb5"></div>
<div class="b" style="left:202.5px;top:607px;width:3px;height:1px;background:#8c8c8c"></div>
<div class="b" style="left:208.4px;top:607px;width:2.2px;height:1px;background:#cdbdb5"></div>
<div class="b" style="left:202.5px;top:619.6px;width:3px;height:1px;background:#8c8c8c"></div>
<div class="b" style="left:208.4px;top:619.6px;width:2.2px;height:1px;background:#cdbdb5"></div>
<div class="b" style="left:202.5px;top:634.5px;width:3px;height:1px;background:#8c8c8c"></div>
<div class="b" style="left:208.4px;top:634.5px;width:2.2px;height:1px;background:#cdbdb5"></div>
<div class="b" style="left:202.5px;top:648.4px;width:3px;height:1px;background:#8c8c8c"></div>
<div class="b" style="left:208.4px;top:648.4px;width:2.2px;height:1px;background:#cdbdb5"></div>
<div class="b" style="left:202.5px;top:661.4px;width:3px;height:1px;background:#8c8c8c"></div>
<div class="b" style="left:208.4px;top:661.4px;width:2.2px;height:1px;background:#cdbdb5"></div>
<div class="b" style="left:202.5px;top:675.5px;width:3px;height:1px;background:#8c8c8c"></div>
<div class="b" style="left:208.4px;top:675.5px;width:2.2px;height:1px;background:#cdbdb5"></div>
<div class="b" style="left:202.5px;top:689.4px;width:3px;height:1px;background:#8c8c8c"></div>
<div class="b" style="left:208.4px;top:689.4px;width:2.2px;height:1px;background:#cdbdb5"></div>
<div class="b" style="left:202.5px;top:703.1px;width:3px;height:1px;background:#8c8c8c"></div>
<div class="b" style="left:208.4px;top:703.1px;width:2.2px;height:1px;background:#cdbdb5"></div>
<div class="b" style="left:202.5px;top:726.4px;width:3px;height:1px;background:#8c8c8c"></div>
<div class="b" style="left:208.4px;top:726.4px;width:2.2px;height:1px;background:#cdbdb5"></div>
<div class="b" style="left:219px;top:593px;width:1.2px;height:138.5px;background:#9a9a9a"></div>
<div class="b" style="left:221px;top:731px;width:620.5px;height:1px;background:#cfcfcf"></div>
<div class="b" style="left:221px;top:627px;width:620.5px;height:1px;background:#a4a4a4"></div>
<div class="b" style="left:221px;top:662px;width:620.5px;height:1px;background:#cbcbcb"></div>
<div class="b" style="left:221px;top:696px;width:620.5px;height:1px;background:#a4a4a4"></div>
<div class="b" style="left:286.1px;top:705.9px;width:16.0px;height:23.899999999999977px;background:#7ecef4"></div>
<div class="b" style="left:286.1px;top:729.8px;width:0.8px;height:1.5px;background:#999"></div>
<div class="b" style="left:298.1px;top:729.8px;width:0.8px;height:1.5px;background:#999"></div>
<div class="t" style="left:71.50px;top:735px;width:200px;text-align:right;font-size:6px;letter-spacing:1.9px;line-height:6px;color:#555;font-weight:400;-webkit-text-stroke:0.1px #555;transform-origin:100% 0;transform:rotate(-45deg)">餐厅设计规范</div>
<div class="b" style="left:351px;top:705.9px;width:15.100000000000023px;height:23.899999999999977px;background:#7ecef4"></div>
<div class="b" style="left:351px;top:729.8px;width:0.8px;height:1.5px;background:#999"></div>
<div class="b" style="left:362.1px;top:729.8px;width:0.8px;height:1.5px;background:#999"></div>
<div class="t" style="left:140.40px;top:735px;width:200px;text-align:right;font-size:6px;letter-spacing:1.9px;line-height:6px;color:#555;font-weight:400;-webkit-text-stroke:0.1px #555;transform-origin:100% 0;transform:rotate(-45deg)">办公用品采购</div>
<div class="b" style="left:420.2px;top:615.7px;width:15.800000000000011px;height:115.29999999999995px;background:#7ecef4"></div>
<div class="b" style="left:420.2px;top:729.8px;width:0.8px;height:1.5px;background:#999"></div>
<div class="b" style="left:432px;top:729.8px;width:0.8px;height:1.5px;background:#999"></div>
<div class="t" style="left:209.30px;top:735px;width:200px;text-align:right;font-size:6px;letter-spacing:1.9px;line-height:6px;color:#555;font-weight:400;-webkit-text-stroke:0.1px #555;transform-origin:100% 0;transform:rotate(-45deg)">能源资源节约</div>
<div class="b" style="left:490.1px;top:696.1px;width:15.699999999999989px;height:33.69999999999993px;background:#7ecef4"></div>
<div class="b" style="left:490.1px;top:729.8px;width:0.8px;height:1.5px;background:#999"></div>
<div class="b" style="left:501.8px;top:729.8px;width:0.8px;height:1.5px;background:#999"></div>
<div class="t" style="left:278.20px;top:735px;width:200px;text-align:right;font-size:6px;letter-spacing:1.9px;line-height:6px;color:#555;font-weight:400;-webkit-text-stroke:0.1px #555;transform-origin:100% 0;transform:rotate(-45deg)">绿色建筑改造</div>
<div class="b" style="left:555px;top:705.9px;width:14.700000000000045px;height:23.899999999999977px;background:#7ecef4"></div>
<div class="b" style="left:555px;top:729.8px;width:0.8px;height:1.5px;background:#999"></div>
<div class="b" style="left:565.7px;top:729.8px;width:0.8px;height:1.5px;background:#999"></div>
<div class="t" style="left:347.10px;top:735px;width:200px;text-align:right;font-size:6px;letter-spacing:1.9px;line-height:6px;color:#555;font-weight:400;-webkit-text-stroke:0.1px #555;transform-origin:100% 0;transform:rotate(-45deg)">垃圾分类处理</div>
<div class="b" style="left:626.5px;top:656.1px;width:15.700000000000045px;height:73.69999999999993px;background:#7ecef4"></div>
<div class="b" style="left:626.5px;top:729.8px;width:0.8px;height:1.5px;background:#999"></div>
<div class="b" style="left:638.2px;top:729.8px;width:0.8px;height:1.5px;background:#999"></div>
<div class="t" style="left:416.00px;top:735px;width:200px;text-align:right;font-size:6px;letter-spacing:1.9px;line-height:6px;color:#555;font-weight:400;-webkit-text-stroke:0.1px #555;transform-origin:100% 0;transform:rotate(-45deg)">节水机关</div>
<div class="b" style="left:692.8px;top:684.7px;width:15.100000000000023px;height:45.09999999999991px;background:#7ecef4"></div>
<div class="b" style="left:692.8px;top:729.8px;width:0.8px;height:1.5px;background:#999"></div>
<div class="b" style="left:703.9px;top:729.8px;width:0.8px;height:1.5px;background:#999"></div>
<div class="t" style="left:484.90px;top:735px;width:200px;text-align:right;font-size:6px;letter-spacing:1.9px;line-height:6px;color:#555;font-weight:400;-webkit-text-stroke:0.1px #555;transform-origin:100% 0;transform:rotate(-45deg)">公共示范</div>
<div class="b" style="left:761px;top:627px;width:15px;height:102.79999999999995px;background:#7ecef4"></div>
<div class="b" style="left:761px;top:729.8px;width:0.8px;height:1.5px;background:#999"></div>
<div class="b" style="left:772px;top:729.8px;width:0.8px;height:1.5px;background:#999"></div>
<div class="t" style="left:553.80px;top:735px;width:200px;text-align:right;font-size:6px;letter-spacing:1.9px;line-height:6px;color:#555;font-weight:400;-webkit-text-stroke:0.1px #555;transform-origin:100% 0;transform:rotate(-45deg)">新能源汽车门</div>
<div class="b" style="left:820px;top:698.5px;width:65px;height:65px;border:2px solid #d0021b;border-radius:50%"></div>
<div class="t" style="left:834.50px;top:709.80px;font-size:19px;letter-spacing:0.00px;line-height:22px;color:#d0021b;font-weight:300;">演示</div>
<div class="t" style="left:834.50px;top:735.50px;font-size:19px;letter-spacing:0.00px;line-height:22px;color:#d0021b;font-weight:300;">数据</div>
</body></html>
